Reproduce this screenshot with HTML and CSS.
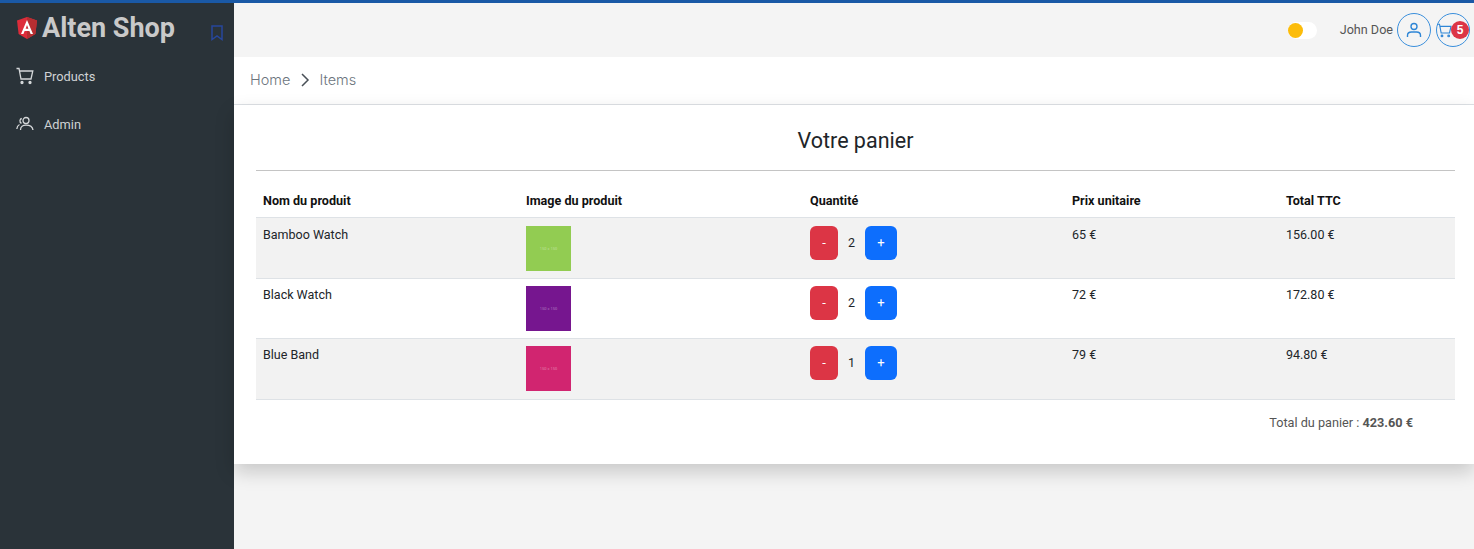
FILE: index.html
```html
<!DOCTYPE html>
<html lang="en">
<head>
  <meta charset="UTF-8" />
  <title>Alten Shop</title>
  <link rel="stylesheet" href="styles.css">
</head>
<body>
  <div class="topline"></div>
  <div class="layout">
    <aside class="sidebar">
      <div class="brand">
        <svg class="logo" width="22" height="24" viewBox="0 0 22 24">
          <polygon points="11,1 21,4.6 19.4,18 11,23 2.6,18 1,4.6" fill="#dd2c3a"/>
          <polygon points="11,1 21,4.6 19.4,18 11,23" fill="#b52e31"/>
          <path d="M11 4 L5 18 H7.4 L8.6 15 H13.4 L14.6 18 H17 Z M9.6 12.8 L11 9 L12.4 12.8 Z" fill="#fff" fill-rule="evenodd"/>
        </svg>
        <span class="brand-name">Alten Shop</span>
        <svg class="bookmark" width="12" height="16" viewBox="0 0 12 16" fill="none" stroke="#27479c" stroke-width="1.5">
          <path d="M1 1 H11 V14.5 L6 11 L1 14.5 Z"/>
        </svg>
      </div>
      <nav>
        <a class="nav-item">
          <svg width="18" height="18" viewBox="0 0 18 18" fill="none" stroke="#d5d8da" stroke-width="1.3">
            <path d="M0.5 1.5 H3 L5 12 H15 L16.8 4 H3.6"/>
            <circle cx="6" cy="15.5" r="1" fill="#d5d8da"/>
            <circle cx="14" cy="15.5" r="1" fill="#d5d8da"/>
          </svg>
          <span>Products</span>
        </a>
        <a class="nav-item">
          <svg width="18" height="18" viewBox="0 0 18 18" fill="none" stroke="#d5d8da" stroke-width="1.3">
            <circle cx="10" cy="5.5" r="3"/>
            <path d="M4.5 15 C4.5 11.5 7 10.2 10 10.2 C13 10.2 16.5 11.5 17 15"/>
            <path d="M5.8 3.5 C3.8 3.8 3 7 5.5 8.3 M3.5 9.5 C2 10.2 1 11.5 0.8 14"/>
          </svg>
          <span>Admin</span>
        </a>
      </nav>
    </aside>
    <main class="main">
      <header class="header">
        <div class="toggle"><span class="knob"></span></div>
        <span class="username">John Doe</span>
        <button class="round-btn">
          <svg width="18" height="18" viewBox="0 0 18 18" fill="none" stroke="#2f86d6" stroke-width="1.4">
            <circle cx="9" cy="5.5" r="3"/>
            <path d="M2.5 16 V14.5 C2.5 12 4.5 11 6.5 11 H11.5 C13.5 11 15.5 12 15.5 14.5 V16"/>
          </svg>
        </button>
        <button class="round-btn cart-btn">
          <svg class="cart-icon" width="15" height="15" viewBox="0 0 18 18" fill="none" stroke="#2f86d6" stroke-width="1.4">
            <path d="M0.5 1.5 H3 L5 12 H15 L16.8 4 H3.6"/>
            <circle cx="6" cy="15.5" r="1"/>
            <circle cx="14" cy="15.5" r="1"/>
          </svg>
          <span class="badge">5</span>
        </button>
      </header>
      <div class="breadcrumb">
        <span>Home</span>
        <svg class="crumb-sep" width="10" height="14" viewBox="0 0 10 14" fill="none" stroke="#495057" stroke-width="1.5">
          <path d="M2 1 L8 7 L2 13"/>
        </svg>
        <span>Items</span>
      </div>
      <section class="card">
        <h2 class="title">Votre panier</h2>
        <hr class="divider" />
        <table class="cart-table">
          <thead>
            <tr>
              <th class="col-name">Nom du produit</th>
              <th class="col-image">Image du produit</th>
              <th class="col-qty">Quantité</th>
              <th class="col-price">Prix unitaire</th>
              <th>Total TTC</th>
            </tr>
          </thead>
          <tbody>
            <tr>
              <td>Bamboo Watch</td>
              <td><div class="thumb green">150 x 150</div></td>
              <td><div class="qty"><button class="qty-btn minus">-</button><span class="qty-val">2</span><button class="qty-btn plus">+</button></div></td>
              <td>65 €</td>
              <td>156.00 €</td>
            </tr>
            <tr>
              <td>Black Watch</td>
              <td><div class="thumb purple">150 x 150</div></td>
              <td><div class="qty"><button class="qty-btn minus">-</button><span class="qty-val">2</span><button class="qty-btn plus">+</button></div></td>
              <td>72 €</td>
              <td>172.80 €</td>
            </tr>
            <tr>
              <td>Blue Band</td>
              <td><div class="thumb pink">150 x 150</div></td>
              <td><div class="qty"><button class="qty-btn minus">-</button><span class="qty-val">1</span><button class="qty-btn plus">+</button></div></td>
              <td>79 €</td>
              <td>94.80 €</td>
            </tr>
          </tbody>
        </table>
        <p class="cart-total">Total du panier : <b>423.60 €</b></p>
      </section>
    </main>
  </div>
</body>
</html>
```

FILE: styles.css
```css
* {
  box-sizing: border-box;
}
html, body {
  height: 100%;
}
body {
  margin: 0;
  background: #f4f4f4;
  font-family: Roboto, sans-serif;
  font-size: 13px;
  color: #212529;
  overflow: hidden;
}
.topline {
  height: 3px;
  background: #1a59a6;
}
.layout {
  display: flex;
  height: 546px;
}

/* sidebar */
.sidebar {
  width: 234px;
  flex-shrink: 0;
  background: #2a3339;
  color: #cfd2d4;
}
.brand {
  display: flex;
  align-items: center;
  height: 49px;
  padding: 0 0 0 16px;
}
.brand-name {
  margin-left: 4px;
  font-size: 27px;
  font-weight: 700;
  color: #c9c9c9;
}
.bookmark {
  margin-left: 36px;
  margin-top: 11px;
}
.nav-item {
  display: flex;
  align-items: center;
  gap: 10px;
  height: 48px;
  padding-left: 16px;
  font-size: 12.8px;
}

/* header */
.main {
  flex: 1;
  min-width: 0;
}
.header {
  display: flex;
  align-items: center;
  justify-content: flex-end;
  height: 54px;
  padding: 0 4px 0 0;
}
.toggle {
  width: 29px;
  height: 17px;
  margin-right: 23px;
  border-radius: 9px;
  background: #fff;
}
.knob {
  display: block;
  width: 15px;
  height: 15px;
  margin-top: 1px;
  border-radius: 50%;
  background: #fcbc0a;
}
.username {
  margin-right: 4px;
  margin-top: -1px;
  color: #555;
  font-size: 12.6px;
}
.round-btn {
  position: relative;
  display: flex;
  align-items: center;
  justify-content: center;
  width: 34px;
  height: 34px;
  padding: 0;
  border: 1px solid #3a8fdc;
  border-radius: 50%;
  background: transparent;
}
.cart-btn {
  justify-content: flex-start;
  margin-left: 5px;
  padding-left: 0;
}
.badge {
  position: absolute;
  top: 7px;
  right: 0;
  width: 18px;
  height: 18px;
  border-radius: 50%;
  background: #dc3545;
  color: #fff;
  font-size: 12px;
  font-weight: 700;
  line-height: 18px;
  text-align: center;
}

/* breadcrumb */
.breadcrumb {
  display: flex;
  align-items: center;
  gap: 9px;
  height: 48px;
  padding: 0 0 2px 16px;
  border-bottom: 1px solid #dee2e6;
  background: #fff;
  color: #6c757d;
  font-family: Inter, sans-serif;
  font-weight: 300;
  font-size: 14.5px;
}
.crumb-sep {
  margin-left: 1px;
}

/* cart */
.card {
  height: 359px;
  padding: 0 19px 0 22px;
  background: #fff;
  box-shadow: 0 8px 18px rgba(0,0,0,0.18);
}
.title {
  margin: 0;
  padding-top: 23px;
  height: 65px;
  font-size: 21.5px;
  font-weight: 400;
  line-height: 26px;
  text-align: center;
}
.divider {
  margin: 0;
  border: none;
  border-top: 1px solid #c4c4c4;
}
.cart-table {
  width: 100%;
  margin-top: 12px;
  border-collapse: collapse;
  table-layout: fixed;
  color: #212529;
}
.cart-table th {
  height: 34px;
  padding: 9px 7px 7px;
  border-bottom: 1px solid #dee2e6;
  font-size: 12.6px;
  font-weight: 700;
  text-align: left;
  color: #111;
}
.cart-table td {
  padding: 7px;
  border-bottom: 1px solid #dee2e6;
  vertical-align: top;
  font-size: 12.5px;
  line-height: 17px;
}
.cart-table tbody tr:first-child td {
  padding-top: 8px;
}
.cart-table tbody tr:last-child td {
  padding-bottom: 8px;
}
.cart-table tbody tr:nth-child(odd) {
  background: #f2f2f2;
}
.col-name { width: 263px; }
.col-image { width: 284px; }
.col-qty { width: 262px; }
.col-price { width: 214px; }
.thumb {
  display: flex;
  align-items: center;
  justify-content: center;
  width: 45px;
  height: 45px;
  font-size: 4px;
  color: rgba(255,255,255,0.4);
}
.green { background: #92cc52; }
.purple { background: #76168f; }
.pink { background: #d12570; }
.qty {
  display: flex;
  align-items: center;
}
.qty-val {
  width: 27px;
  text-align: center;
}
.qty-btn {
  height: 34px;
  padding: 0;
  border: none;
  border-radius: 6px;
  color: #fff;
  font-family: Roboto, sans-serif;
  font-size: 13px;
}
.minus {
  width: 28px;
  background: #dc3545;
}
.plus {
  width: 32px;
  background: #0d6efd;
}
.cart-total {
  margin: 15px 42px 0 0;
  color: #555;
  font-size: 12.7px;
  text-align: right;
}
```
